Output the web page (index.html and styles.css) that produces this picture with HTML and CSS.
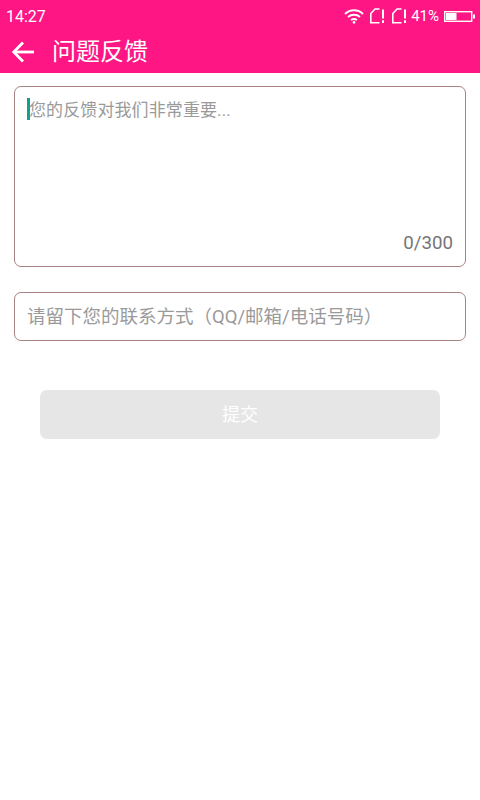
FILE: index.html
```html
<!DOCTYPE html>
<html lang="zh">
<head>
<meta charset="utf-8">
<title>问题反馈</title>
<link rel="stylesheet" href="styles.css">
</head>
<body>
<header class="app-head">
  <div class="status">
    <span class="time">14:27</span>
    <div class="status-icons">
      <svg class="wifi" width="20" height="16" viewBox="0 0 20 16" fill="none" stroke="#fff" stroke-width="1.9"><path d="M1 6C6 1 14 1 19 6"/><path d="M4 9C7.5 6 12.5 6 16 9"/><path d="M7 12C8.8 10.8 11.2 10.8 13 12"/><circle cx="10" cy="14.4" r="1.3" fill="#fff" stroke="none"/></svg>
      <svg class="sim" width="15" height="16" viewBox="0 0 15 16" fill="none" stroke="#fff" stroke-width="1.6"><path d="M9.500 14.700H0.800V5.500L5 1H9.500"/><path d="M13 1.500V10.500M13 12.300V15" stroke-width="2"/></svg>
      <svg class="sim" width="15" height="16" viewBox="0 0 15 16" fill="none" stroke="#fff" stroke-width="1.6"><path d="M9.500 14.700H0.800V5.500L5 1H9.500"/><path d="M13 1.500V10.500M13 12.300V15" stroke-width="2"/></svg>
      <span class="pct">41%</span>
      <svg class="batt" width="31" height="11" viewBox="0 0 31 11"><rect x="0.700" y="0.700" width="27" height="9.600" fill="none" stroke="#fff" stroke-width="1.400"/><rect x="2" y="2" width="10.500" height="7" fill="#fff"/><rect x="29" y="3.500" width="2" height="4" fill="#fff"/></svg>
    </div>
  </div>
  <div class="toolbar">
    <svg class="back" width="24" height="22" viewBox="0 0 24 22" fill="none" stroke="#fff" stroke-width="2.800"><path d="M23 11H3"/><path d="M12 1.500L2.800 11L12 20.500"/></svg>
    <h1 class="title">问题反馈</h1>
  </div>
</header>
<main class="content">
  <div class="box box-large">
    <div class="placeholder-row"><span class="caret"></span><span class="hint hint-main">您的反馈对我们非常重要...</span></div>
    <div class="counter">0/300</div>
  </div>
  <div class="box box-small"><span class="hint hint-contact">请留下您的联系方式（QQ/邮箱/电话号码）</span></div>
  <button class="submit" type="button">提交</button>
</main>
</body>
</html>
```
FILE: styles.css
```css
* { box-sizing: border-box; }
html, body { margin: 0; padding: 0; }
body {
  width: 480px;
  height: 800px;
  background: #fff;
  overflow: hidden;
  font-family: Roboto, "Noto Sans CJK SC", sans-serif;
}
.app-head { background: #fe1685; color: #fff; height: 73px; }
.status {
  height: 32px;
  display: flex;
  align-items: center;
  justify-content: space-between;
  padding: 0 5px 0 6px;
}
.time { font-size: 16px; }
.status-icons { display: flex; align-items: center; }
.wifi { margin-right: 6px; }
.sim { margin-right: 7px; }
.sim + .sim { margin-right: 4px; }
.pct { font-size: 15px; margin-right: 5px; }
.toolbar { height: 41px; display: flex; align-items: center; padding-left: 11px; padding-bottom: 2px; }
.back { margin-right: 17px; }
.title { margin: 0; font-size: 24px; font-weight: 400; line-height: 32px; }
.content { padding: 13px 14px 0; display: flex; flex-direction: column; }
.box { border: 1px solid #a88284; border-radius: 7px; background: #fff; }
.box-large {
  height: 181px;
  padding: 11px 12px 11px;
  display: flex;
  flex-direction: column;
  justify-content: space-between;
}
.placeholder-row { display: flex; align-items: flex-start; height: 24px; }
.caret { width: 3px; height: 22px; background: #14a08e; margin-right: -1px; flex: none; }
.hint { color: #9a9a9a; line-height: 24px; }
.hint-main { font-size: 17px; letter-spacing: 0.1px; }
.hint-contact { font-size: 18.500px; white-space: nowrap; }
.counter { text-align: right; color: #757575; font-size: 18.700px; line-height: 24px; }
.box-small { margin-top: 25px; height: 49px; padding: 0 12px; display: flex; align-items: center; }
.submit {
  margin: 49px 26px 0;
  height: 49px;
  padding: 0 0 3px;
  border: 0;
  border-radius: 7px;
  background: #e6e6e6;
  color: #fff;
  font: inherit;
  font-size: 18px;
}
```
